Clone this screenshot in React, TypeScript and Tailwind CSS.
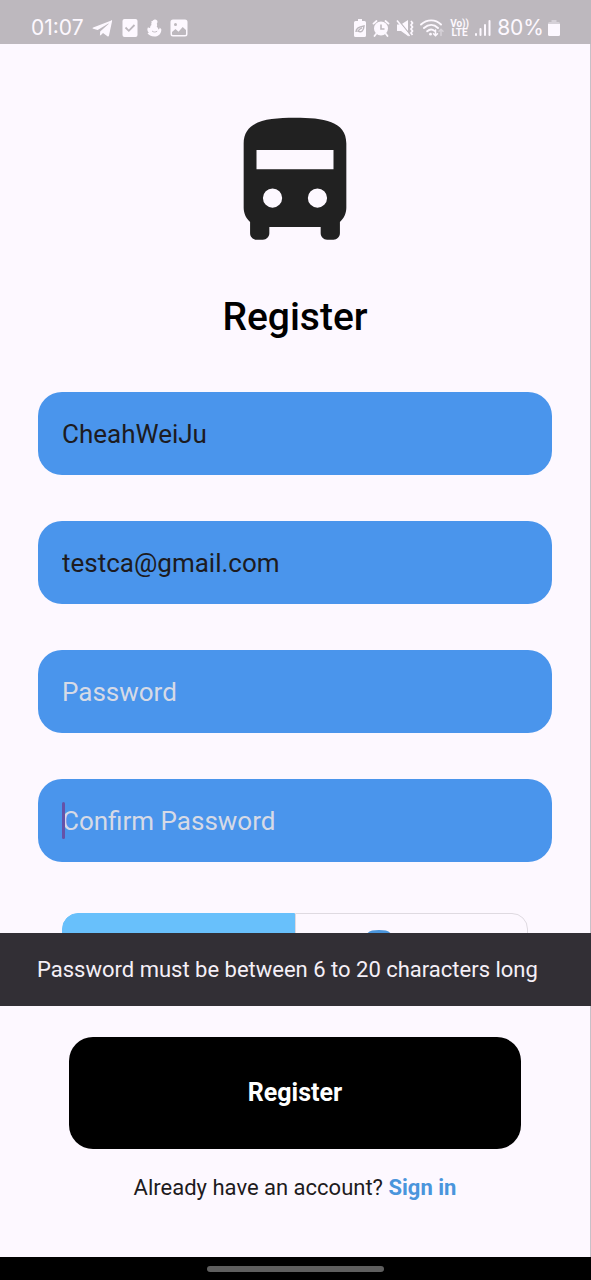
import { useState } from "react";
import type { InputHTMLAttributes } from "react";

function BusIcon() {
  return (
    <svg viewBox="0 0 24 24" className="size-[154px]" fill="#212121" aria-hidden="true">
      <path
        fillRule="evenodd"
        d="M4 16c0 .88.39 1.67 1 2.22V20c0 .55.45 1 1 1h1c.55 0 1-.45 1-1v-1h8v1c0 .55.45 1 1 1h1c.55 0 1-.45 1-1v-1.78c.61-.55 1-1.34 1-2.22V6c0-3.5-3.58-4-8-4s-8 .5-8 4v10zm4.5 0a1.5 1.5 0 1 1 0-3 1.5 1.5 0 0 1 0 3zm7 0a1.5 1.5 0 1 1 0-3 1.5 1.5 0 0 1 0 3zM6 7h12v3H6z"
      />
    </svg>
  );
}

function StatusBar() {
  return (
    <header className="flex h-11 shrink-0 items-end justify-between bg-[#bdb8be] px-[31px] pb-1 font-['Inter',sans-serif] text-[21px] leading-6 text-[#fdf8ff]">
      <div className="flex items-center gap-2">
        <span>01:07</span>
        <svg viewBox="0 0 22 18" className="h-[18px] w-[22px]" fill="currentColor" aria-hidden="true">
          <path d="M20 1.200L1.200 8.400c-.9.400-.8 1 0 1.300l4.500 1.400L16 4.700c.5-.3.900 0 .5.300l-8.300 7.500-.3 4c.5 0 .8-.2 1.100-.5l2-2 4.400 3.200c.8.400 1.400.2 1.600-.8l3-14c.3-1.200-.2-1.600-1-1.200z" />
        </svg>
        <svg viewBox="0 0 16 18" className="h-[18px] w-4" aria-hidden="true">
          <rect x="0.5" width="15" height="18" rx="2" fill="currentColor" />
          <path d="M3.500 8.500l3.300 3.300L12.500 6" fill="none" stroke="#bdb8be" strokeWidth="1.800" />
        </svg>
        <svg viewBox="0 0 16 18" className="h-[18px] w-4" fill="currentColor" aria-hidden="true">
          <path d="M8 .8c1.800-.8 3.500.3 3.500 2 0 .8-.3 1.400-.7 1.900.5 1 .5 2-.1 3 1 .7 1.600 1.700 1.700 2.800.9-.3 1.300-1 1.300-2l1.600 1.700c.3 4-2.500 7.300-6.800 7.300-3.400 0-5.800-1.200-7-3.200l1.400-.8C1.200 12.300.9 10 2 8.200c.7.6 1.400.8 2.200.6-.2-1.300.3-2.300 1.300-2.900-.4-1-.3-1.800.3-2.600l-.8-.7 1.500-.5C6.800 1.500 7.300 1 8 .8z" />
          <path d="M6 12c1.500 1.300 3.500 1.400 5.200.2" fill="none" stroke="#bdb8be" strokeWidth="0.9" />
        </svg>
        <svg viewBox="0 0 18 18" className="size-[18px]" aria-hidden="true">
          <path fillRule="evenodd" fill="currentColor" d="M3 .5h12A2.500 2.500 0 0 1 17.500 3v12a2.500 2.500 0 0 1-2.500 2.500H3A2.500 2.500 0 0 1 .5 15V3A2.500 2.500 0 0 1 3 .5zM2 13v2.200c0 .5.300.8.800.8h12.400c.5 0 .8-.3.800-.8V11l-3.300-3L8.500 12.800 5.500 10z" />
          <circle cx="5.500" cy="5.500" r="1.500" fill="#bdb8be" />
        </svg>
      </div>
      <div className="flex items-center gap-1.5">
        <svg viewBox="0 0 12 18" className="h-[18px] w-3" aria-hidden="true">
          <path d="M4 0h4v2h2.500A1.500 1.500 0 0 1 12 3.500v13a1.500 1.500 0 0 1-1.500 1.500h-9A1.500 1.500 0 0 1 0 16.500v-13A1.500 1.500 0 0 1 1.500 2H4z" fill="currentColor" />
          <path d="M2 13c0-4 3-5 8-6-.3 4.500-2.500 7-6 5.200 1-1.800 2.300-2.700 4-3.300" fill="none" stroke="#bdb8be" strokeWidth="1.500" />
        </svg>
        <svg viewBox="0 0 18 18" className="size-[18px]" aria-hidden="true">
          <circle cx="9" cy="9.500" r="7" fill="currentColor" />
          <path d="M1.500 4.600l3-2.600M16.500 4.600l-3-2.600M4 15l-1.500 2M14 15l1.500 2" stroke="currentColor" strokeWidth="1.800" strokeLinecap="round" />
          <path d="M9 5.500V10h3.500" fill="none" stroke="#bdb8be" strokeWidth="1.600" />
        </svg>
        <svg viewBox="0 0 18 18" className="size-[18px]" aria-hidden="true">
          <path d="M1 5.500h4L12 1v16l-7-5H1z" fill="currentColor" />
          <path d="M2.200.8L14 15.500" stroke="#bdb8be" strokeWidth="1.200" />
          <path d="M1 1.500L13.500 17" stroke="currentColor" strokeWidth="1.600" />
          <path d="M15 2l1.500 2L15 6l1.500 2L15 10l1.500 2L15 14l1.500 2" fill="none" stroke="currentColor" strokeWidth="1.700" />
        </svg>
        <svg viewBox="0 0 24 18" className="h-[18px] w-6" fill="none" stroke="currentColor" strokeWidth="1.900" strokeLinecap="round" aria-hidden="true">
          <path d="M1 5.500c6-5.500 14.500-5.500 20 0M4 9c4.500-4 10-4 14 0M7.200 12.300c2.400-2.200 5.200-2.200 7.300-.4" />
          <circle cx="10.500" cy="15.200" r="1.400" fill="currentColor" stroke="none" />
          <path d="M15.500 11v5.500M13.500 14.800l2 2 2-2" strokeWidth="1.500" />
          <path d="M21 16.500v-6M19 12.200l2-2 2 2" strokeWidth="1.500" opacity="0.4" />
        </svg>
        <span className="flex flex-col text-center font-['Roboto',sans-serif] text-[10px] leading-[9px] font-bold">
          <span>Vo))</span>
          <span>LTE</span>
        </span>
        <svg viewBox="0 0 16 18" className="h-[18px] w-4" fill="currentColor" aria-hidden="true">
          <rect x="0" y="14" width="2" height="3" rx="1" />
          <rect x="4.500" y="9" width="2" height="8" rx="1" />
          <rect x="9" y="5" width="2" height="12" rx="1" />
          <rect x="13.500" y="1" width="2" height="16" rx="1" />
        </svg>
        <span className="flex items-center gap-1">
          80%
          <svg viewBox="0 0 12 18" className="h-[18px] w-3" fill="currentColor" aria-hidden="true">
            <path opacity="0.4" d="M3.500 1h5v2h2A1.500 1.500 0 0 1 12 4.500V6H0V4.500A1.500 1.500 0 0 1 1.500 3h2z" />
            <path d="M0 5h12v10.500a1.500 1.500 0 0 1-1.500 1.500h-9A1.500 1.500 0 0 1 0 15.500z" />
          </svg>
        </span>
      </div>
    </header>
  );
}

function Field({ label, caret, ...input }: { label: string; caret?: boolean } & InputHTMLAttributes<HTMLInputElement>) {
  return (
    <div className="relative">
      <input
        {...input}
        aria-label={label}
        placeholder={label}
        className="block h-[83px] w-full rounded-[24px] bg-[#4a95ec] px-6 text-[26px] text-[#1d1b20] outline-none placeholder:text-[#d6dae6]"
      />
      {caret && <span className="absolute top-[23px] left-6 h-[37px] w-[3px] rounded-full bg-[#6552a8]" />}
    </div>
  );
}

export default function App() {
  const [role, setRole] = useState("passenger");
  return (
    <div className="flex h-dvh flex-col bg-[#fdf8ff] font-['Roboto',sans-serif] text-[#1d1b20]">
      <StatusBar />
      <form className="flex min-h-0 flex-1 flex-col border-r border-[#c6c1c8]" onSubmit={(e) => e.preventDefault()}>
        <main className="flex min-h-0 flex-1 flex-col overflow-y-auto px-[38px] pt-[61px] [scrollbar-width:none]">
          <div className="flex shrink-0 justify-center">
            <BusIcon />
          </div>
          <h1 className="mt-[35px] shrink-0 text-center text-[39px] leading-[46px] font-medium text-black">Register</h1>
          <div className="mt-[52px] flex shrink-0 flex-col gap-[46px]">
            <Field label="Username" type="text" defaultValue="CheahWeiJu" />
            <Field label="Email" type="email" defaultValue="testca@gmail.com" />
            <Field label="Password" type="password" />
            <Field label="Confirm Password" type="password" caret />
          </div>
          <div className="mx-6 mt-[51px] grid h-20 shrink-0 grid-cols-2">
            <button
              type="button"
              aria-label="Passenger"
              aria-pressed={role === "passenger"}
              onClick={() => setRole("passenger")}
              className="rounded-l-[16px] border border-[#dfdae1] aria-pressed:border-[#68c0fb] aria-pressed:bg-[#68c0fb]"
            />
            <button
              type="button"
              aria-label="Driver"
              aria-pressed={role === "driver"}
              onClick={() => setRole("driver")}
              className="flex justify-start rounded-r-[16px] border border-[#dfdae1] pt-4 pl-[67px] aria-pressed:border-[#68c0fb] aria-pressed:bg-[#68c0fb]"
            >
              <svg viewBox="0 0 32 32" className="size-8" fill="#4a95dc" aria-hidden="true">
                <path d="M16 0C8 0 3 1.500 3 8v14c0 3 2 5 4 5v3h4v-3h10v3h4v-3c2 0 4-2 4-5V8c0-6.500-5-8-13-8z" />
              </svg>
            </button>
          </div>
        </main>
        <div role="alert" className="-mr-px bg-[#322f35] px-[37px] pt-6 pb-[23px] text-[22px] leading-[26px] text-[#f5eff7]">
          Password must be between 6 to 20 characters long
        </div>
        <footer className="flex flex-col items-center px-[69px] pt-[31px] pb-[56px]">
          <button type="submit" className="h-28 w-full rounded-[24px] bg-black text-[25px] font-bold text-white">
            Register
          </button>
          <p className="mt-[26px] text-[22px] leading-[26px]">
            Already have an account?{" "}
            <a href="#sign-in" className="font-bold text-[#4a95dc]">
              Sign in
            </a>
          </p>
        </footer>
      </form>
      <div className="flex h-[23px] shrink-0 items-center justify-center bg-black">
        <span className="h-1.5 w-[177px] rounded-full bg-[#5f5f5f]" />
      </div>
    </div>
  );
}
